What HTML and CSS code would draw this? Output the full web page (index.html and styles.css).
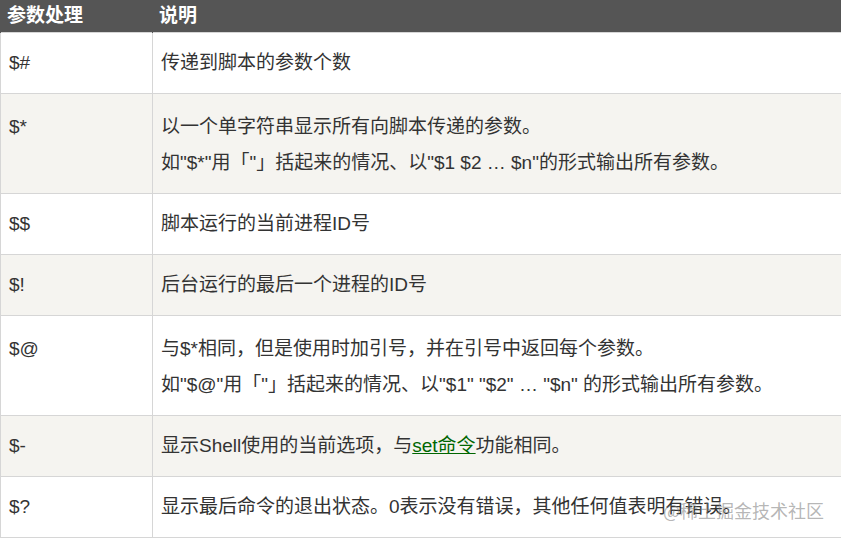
FILE: index.html
```html
<!DOCTYPE html>
<html>
	<head>
		<meta charset="utf-8">
		<title>Shell 参数处理</title>
		<link rel="stylesheet" href="styles.css">
	</head>
	<body>
		<table class="params">
			<thead>
				<tr>
					<th class="col1">参数处理</th>
					<th>说明</th>
				</tr>
			</thead>
			<tbody>
				<tr>
					<td class="col1">$#</td>
					<td>传递到脚本的参数个数</td>
				</tr>
				<tr class="alt">
					<td class="col1 multi">$*</td>
					<td class="multi">
						<p>以一个单字符串显示所有向脚本传递的参数。</p>
						<p>如"$*"用「"」括起来的情况、以"$1 $2 … $n"的形式输出所有参数。</p>
					</td>
				</tr>
				<tr>
					<td class="col1">$$</td>
					<td>脚本运行的当前进程ID号</td>
				</tr>
				<tr class="alt">
					<td class="col1">$!</td>
					<td>后台运行的最后一个进程的ID号</td>
				</tr>
				<tr>
					<td class="col1 multi">$@</td>
					<td class="multi">
						<p>与$*相同，但是使用时加引号，并在引号中返回每个参数。</p>
						<p>如"$@"用「"」括起来的情况、以"$1" "$2" … "$n" 的形式输出所有参数。</p>
					</td>
				</tr>
				<tr class="alt">
					<td class="col1">$-</td>
					<td>显示Shell使用的当前选项，与<a href="#">set命令</a>功能相同。</td>
				</tr>
				<tr>
					<td class="col1">$?</td>
					<td>显示最后命令的退出状态。0表示没有错误，其他任何值表明有错误。</td>
				</tr>
			</tbody>
		</table>
		<div class="mark">@稀土掘金技术社区</div>
	</body>
</html>
```

FILE: styles.css
```css
*{
	padding: 0;
	margin: 0;
}
body{
	background: #fff;
	font-family: "Liberation Sans", "Noto Sans CJK SC", sans-serif;
	color: #333;
	width: 841px;
	height: 538px;
	overflow: hidden;
	position: relative;
}
.params{
	width: 850px;
	border-collapse: collapse;
	font-size: 19px;
}
.params th{
	background: #555;
	color: #fff;
	font-weight: bold;
	text-align: left;
	height: 32px;
	line-height: 32px;
	padding: 0 6px;
	border-left: 1px solid #555;
}
.params td{
	padding: 12px 8px;
	line-height: 36px;
	vertical-align: top;
	border: 1px solid #d6d6d6;
}
.params td.multi{
	padding-top: 15px;
	padding-bottom: 12px;
}
.params .col1{
	width: 135px;
}
.params tr.alt td{
	background: #f5f4f0;
}
.params a{
	color: #006600;
}
.mark{
	position: absolute;
	right: 17px;
	top: 497px;
	font-size: 18px;
	color: rgba(120,120,120,0.55);
	font-family: "Noto Sans CJK SC", sans-serif;
}
```
